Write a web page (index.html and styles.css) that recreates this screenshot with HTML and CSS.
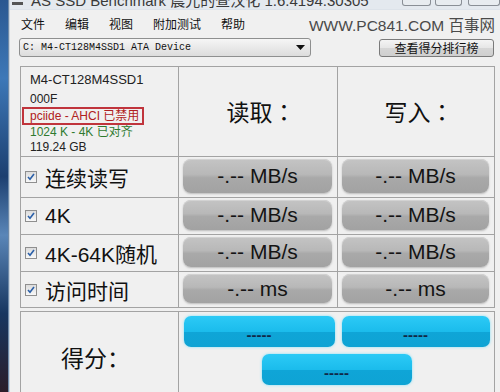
FILE: index.html
```html
<!DOCTYPE html>
<html lang="zh-CN">
<head>
<meta charset="UTF-8">
<title>AS SSD Benchmark</title>
<link rel="stylesheet" href="styles.css">
</head>
<body>
<div class="desktop"></div>
<div class="window">
  <div class="titlebar">
    <span class="app-icon"></span>
    <span class="title">AS SSD Benchmark 晨光的查汉化 1.6.4194.30305</span>
    <span class="caps">
      <span class="cap cap-min"></span>
      <span class="cap cap-max"></span>
      <span class="cap cap-close"></span>
    </span>
  </div>

  <div class="menubar">
    <span>文件</span>
    <span>编辑</span>
    <span>视图</span>
    <span>附加测试</span>
    <span>帮助</span>
    <span class="watermark">WWW.PC841.COM 百事网</span>
  </div>

  <div class="toolbar">
    <div class="combo">
      <span>C: M4-CT128M4SSD1 ATA Device</span>
      <svg class="combo-arrow" width="9" height="5" viewBox="0 0 9 5"><path d="M0 0h9L4.5 5z" fill="#111"/></svg>
    </div>
    <button class="rank">查看得分排行榜</button>
  </div>

  <div class="bench">
    <div class="cell info">
      <div class="model">M4-CT128M4SSD1</div>
      <div>000F</div>
      <div><span class="ahci">pciide - AHCI 已禁用</span></div>
      <div class="align">1024 K - 4K 已对齐</div>
      <div>119.24 GB</div>
    </div>
    <div class="cell head">读取<span class="colon">：</span></div>
    <div class="cell head">写入<span class="colon">：</span></div>

    <div class="cell label"><span class="check"><svg width="8" height="8" viewBox="0 0 8 8"><path d="M1 4l2 2.2L7 1" fill="none" stroke="#2a5fa8" stroke-width="1.6"/></svg></span>连续读写</div>
    <div class="cell val"><div class="pill">-.-- MB/s</div></div>
    <div class="cell val"><div class="pill">-.-- MB/s</div></div>

    <div class="cell label"><span class="check"><svg width="8" height="8" viewBox="0 0 8 8"><path d="M1 4l2 2.2L7 1" fill="none" stroke="#2a5fa8" stroke-width="1.6"/></svg></span>4K</div>
    <div class="cell val"><div class="pill">-.-- MB/s</div></div>
    <div class="cell val"><div class="pill">-.-- MB/s</div></div>

    <div class="cell label"><span class="check"><svg width="8" height="8" viewBox="0 0 8 8"><path d="M1 4l2 2.2L7 1" fill="none" stroke="#2a5fa8" stroke-width="1.6"/></svg></span>4K-64K随机</div>
    <div class="cell val"><div class="pill">-.-- MB/s</div></div>
    <div class="cell val"><div class="pill">-.-- MB/s</div></div>

    <div class="cell label"><span class="check"><svg width="8" height="8" viewBox="0 0 8 8"><path d="M1 4l2 2.2L7 1" fill="none" stroke="#2a5fa8" stroke-width="1.6"/></svg></span>访问时间</div>
    <div class="cell val"><div class="pill">-.-- ms</div></div>
    <div class="cell val"><div class="pill">-.-- ms</div></div>
  </div>

  <div class="score">
    <div class="cell score-label">得分<span class="colon">：</span></div>
    <div class="cell score-vals">
      <div class="blue b1">-----</div>
      <div class="blue b2">-----</div>
      <div class="blue b3">-----</div>
    </div>
  </div>
</div>
</body>
</html>
```

FILE: styles.css
```css
body {
  margin: 0;
  width: 500px;
  height: 392px;
  overflow: hidden;
  display: flex;
  background: #1d3e6e;
  font-family: 'Liberation Sans', Arial, 'Noto Sans CJK SC', sans-serif;
}

.desktop {
  width: 8px;
  flex: none;
  background: linear-gradient(180deg, #2a5790 0%, #3d78b8 20%, #1c3f70 45%, #5a86b8 60%, #173660 80%, #2b1d2a 100%);
  border-right: 1px solid #6f8aa8;
}

.window {
  flex: 1;
  background: #f0f0f0;
  border-left: 1px solid #c9d3de;
}

/* title bar, mostly cut off at the top */
.titlebar {
  height: 9px;
  overflow: hidden;
  display: flex;
  align-items: flex-start;
  background: #e4e9ef;
  border-bottom: 1px solid #dde3ea;
}

.app-icon {
  width: 11px;
  height: 3px;
  margin: 2px 0 0 2px;
  background: #555;
}

.title {
  margin: -11px 0 0 8px;
  font-size: 15px;
  color: #3a3a3a;
  white-space: nowrap;
}

.caps {
  margin-left: auto;
  display: flex;
  gap: 4px;
}

.cap {
  height: 5px;
  border: 1px solid #8a8f96;
  border-top: none;
  border-radius: 0 0 3px 3px;
  background: #e8ecf0;
}

.cap-min { width: 27px; }
.cap-max { width: 25px; margin-right: 2px; }
.cap-close { width: 30px; }

/* menu */
.menubar {
  height: 25px;
  padding-top: 2px;
  box-sizing: border-box;
  display: flex;
  align-items: center;
  gap: 20px;
  padding-left: 11px;
  font-family: 'Noto Sans CJK SC', sans-serif;
  font-size: 12px;
  color: #111;
}

.watermark {
  margin-left: auto;
  margin-right: 5px;
  font-family: 'Liberation Sans', 'Noto Sans CJK SC', sans-serif;
  font-size: 15.5px;
  color: #4a4a4a;
}

.toolbar {
  display: flex;
  align-items: center;
  padding: 3px 0 0 9px;
  height: 19px;
}

.combo {
  width: 287px;
  height: 17px;
  border: 1px solid #8e8f8f;
  border-radius: 3px;
  background: linear-gradient(#f6f6f6, #dcdcdc);
  display: flex;
  align-items: center;
  padding-left: 3px;
  font-family: 'Liberation Mono', monospace;
  font-size: 10px;
  color: #111;
}

.combo-arrow {
  margin-left: auto;
  margin-right: 5px;
}

.rank {
  margin-left: auto;
  margin-right: 6px;
  width: 115px;
  height: 18px;
  padding: 0;
  border: 1px solid #7a7a7a;
  border-radius: 3px;
  background: linear-gradient(#f4f4f4 0%, #e6e6e6 50%, #d6d6d6 51%, #cfcfcf 100%);
  font-family: 'Noto Sans CJK SC', sans-serif;
  font-size: 12px;
  line-height: 16px;
  color: #111;
}

/* result table */
.bench {
  margin: 9px 0 0 10px;
  width: 473px;
  display: grid;
  grid-template-columns: 157px 158px 156px;
  grid-template-rows: 89px 40px 36px 36px 35px;
  gap: 1px;
  border: 1px solid #a3a3a3;
  background: #a3a3a3;
}

.cell {
  background: #f0f0f0;
}

.info {
  padding: 5px 0 0 9px;
  font-size: 12px;
  line-height: 15px;
  color: #222;
}

.info .model {
  font-size: 13px;
  margin-bottom: 5px;
}

.ahci {
  display: inline-block;
  margin-left: -8px;
  padding: 0 3px 0 6px;
  border: 2px solid #c0343c;
  line-height: 14px;
  color: #b02020;
}

.align {
  color: #2f7a2f;
}

.head {
  display: flex;
  align-items: center;
  justify-content: center;
  padding: 0 0 1px 6px;
  font-family: 'Noto Sans CJK SC', sans-serif;
  font-size: 23px;
  color: #111;
}

.colon {
  font-family: 'Noto Sans CJK TC', sans-serif;
}

.label {
  display: flex;
  align-items: center;
  padding-left: 4px;
  font-family: 'Liberation Sans', 'Noto Sans CJK SC', sans-serif;
  font-size: 21px;
  color: #111;
}

.check {
  width: 10px;
  height: 10px;
  margin-right: 8px;
  border: 1px solid #8f8f8f;
  background: linear-gradient(#dcdcdc, #f8f8f8);
  display: flex;
  align-items: center;
  justify-content: center;
}

.val {
  padding: 2px 5px 4px 4px;
  display: flex;
}

.pill {
  flex: 1;
  border-radius: 8px;
  background: linear-gradient(#c4c4c4 0%, #b8b8b8 45%, #a9a9a9 55%, #a2a2a2 100%);
  box-shadow: inset 0 1px 0 #d2d2d2, 0 1px 2px #bbb;
  display: flex;
  align-items: center;
  justify-content: center;
  font-size: 21px;
  color: #141414;
}

/* score */
.score {
  margin: 3px 0 0 10px;
  width: 473px;
  height: 90px;
  display: grid;
  grid-template-columns: 157px 315px;
  gap: 1px;
  border: 1px solid #a3a3a3;
  border-bottom: none;
  background: #a3a3a3;
}

.score-label {
  padding: 28px 0 0 40px;
  font-family: 'Noto Sans CJK SC', sans-serif;
  font-size: 23px;
  color: #111;
}

.score-vals {
  display: flex;
  flex-wrap: wrap;
  justify-content: center;
  align-content: flex-start;
  gap: 7px;
  padding-top: 4px;
}

.blue {
  height: 31px;
  border-radius: 7px;
  background: linear-gradient(#2ccaf6 0%, #1bbcec 50%, #0fa5d7 52%, #0ea3d4 100%);
  box-shadow: 0 0 3px #7fe0fa;
  display: flex;
  align-items: center;
  justify-content: center;
  padding-top: 6px;
  box-sizing: border-box;
  font-size: 15px;
  font-weight: bold;
  color: #102848;
}

.b1 { width: 151px; }
.b2 { width: 148px; }
.b3 { width: 150px; }
```
